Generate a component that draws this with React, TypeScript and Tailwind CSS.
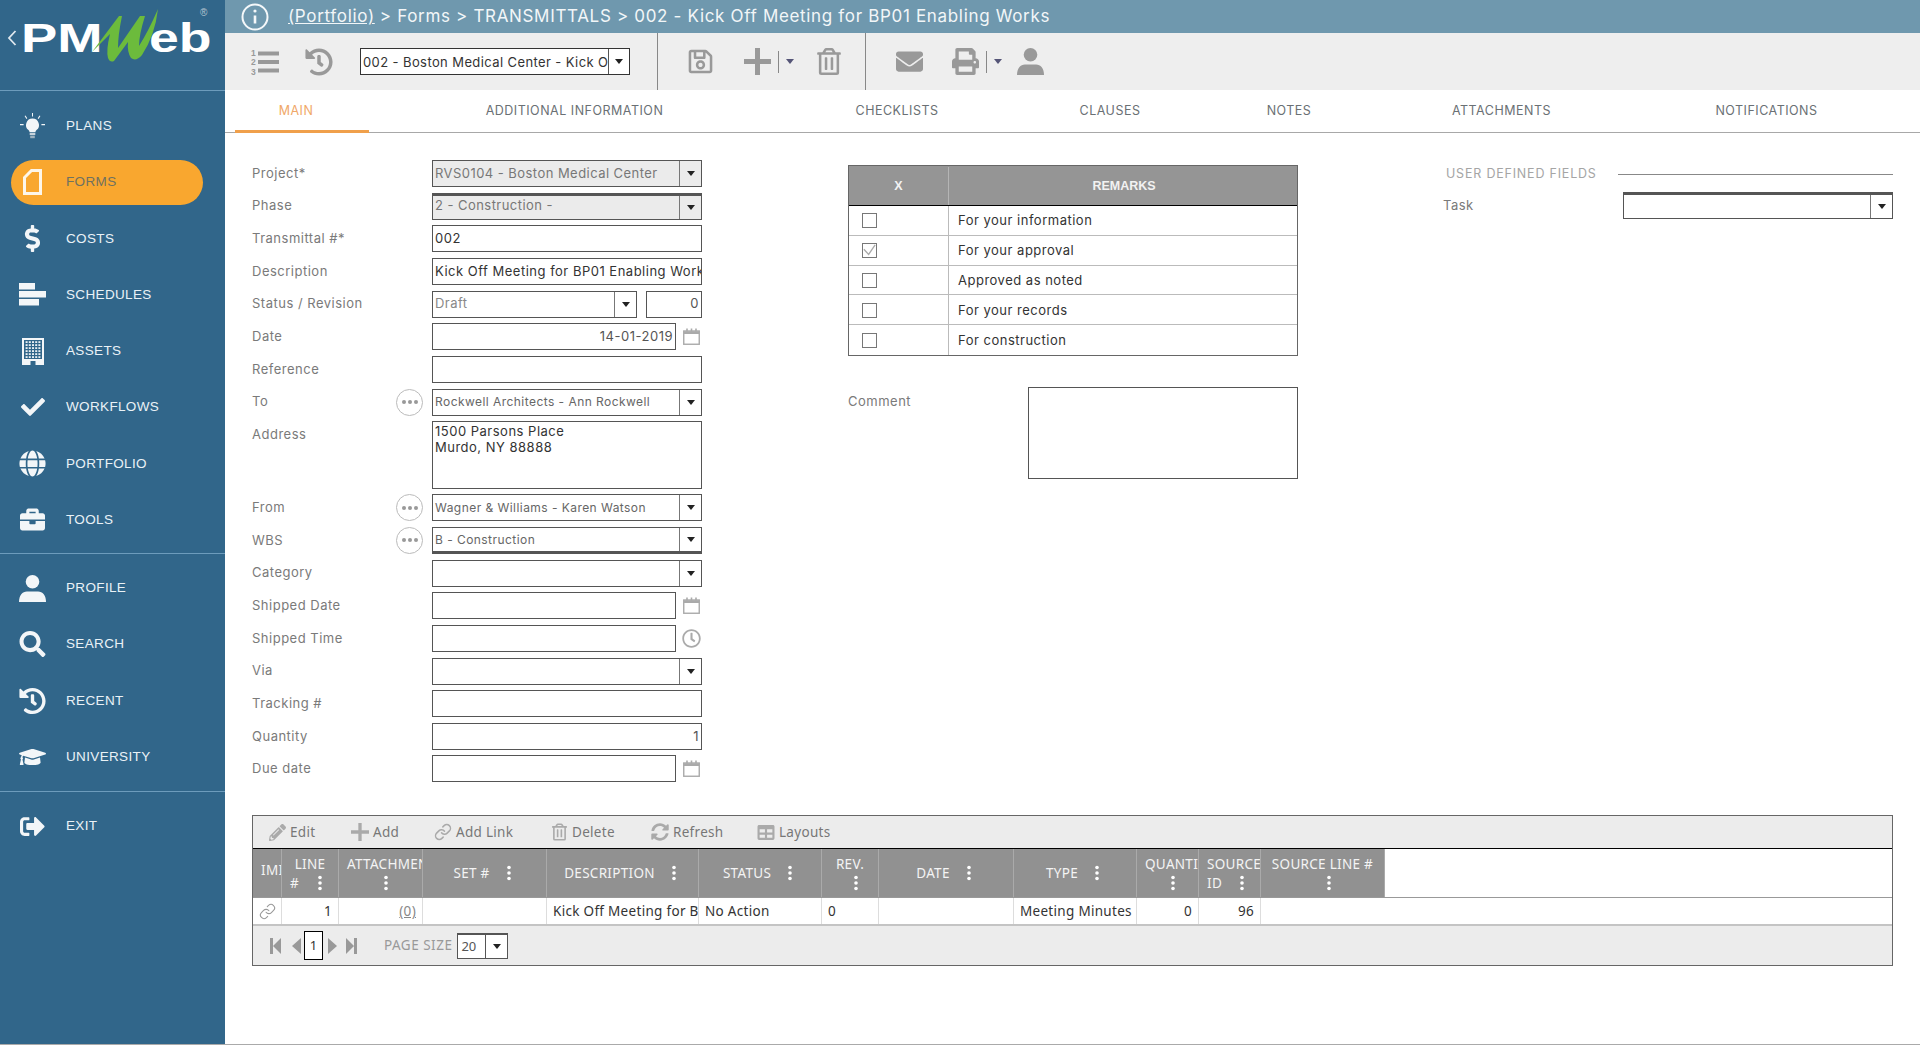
import type { ReactNode } from "react";
import { Link as LinkIcon } from "lucide-react";
import {
  FaBriefcase,
  FaCheck,
  FaDollarSign,
  FaEnvelope,
  FaGlobe,
  FaGraduationCap,
  FaHistory,
  FaPencilAlt,
  FaPrint,
  FaRegClock,
  FaRegSave,
  FaRegTrashAlt,
  FaSearch,
  FaSignOutAlt,
  FaSyncAlt,
  FaTable,
} from "react-icons/fa";

function BulbIcon() {
  return (
    <svg viewBox="0 0 25 26" className="h-[26px] w-[25px]" fill="currentColor">
      <path d="M12.5 5.5a6.5 6.5 0 0 0-4 11.6c.7.6 1 1.3 1.1 2.2h5.8c.1-.9.4-1.6 1.1-2.2a6.5 6.5 0 0 0-4-11.6z" />
      <rect x="9.7" y="20" width="5.6" height="2" fill="#c9d4dc" />
      <rect x="10.2" y="22.6" width="4.6" height="2.6" fill="#9fb2bf" />
      <path d="M12 0h1v3.4h-1zM4.6 3.1l.9-.6 1.8 2.8-.9.6zM19.5 2.5l.9.6-1.8 2.8-.9-.6zM0 11h3.6v1.2H0zM21.4 11H25v1.2h-3.6z" />
    </svg>
  );
}

function FormIcon() {
  return (
    <svg viewBox="0 0 19 26" className="h-[26px] w-[19px]" fill="none" stroke="currentColor" strokeWidth="3">
      <path d="M17.5 1.5v23h-16V8.5l7-7z" />
    </svg>
  );
}

function ScheduleIcon() {
  return (
    <svg viewBox="0 0 27 23" className="h-[23px] w-[27px]" fill="currentColor">
      <rect x="0" y="0" width="16" height="6.5" />
      <rect x="0" y="8" width="27" height="6.5" />
      <rect x="0" y="16" width="20" height="6.5" />
    </svg>
  );
}

function BuildingIcon() {
  const windows = [];
  for (let r = 0; r < 6; r++) {
    for (let c = 0; c < 5; c++) {
      windows.push(<rect key={`${r}-${c}`} x={3.6 + c * 3.2} y={3.2 + r * 3} width="2" height="1.8" fill="#e9eff3" />);
    }
  }
  return (
    <svg viewBox="0 0 22 27" className="h-[27px] w-[22px]">
      <path d="M0 0h22v27H13.5v-4h-5v4H0z" fill="#f3f6f8" />
      <rect x="2" y="2" width="18" height="19" fill="#31668a" />
      {windows}
    </svg>
  );
}

function UserIcon({ className }: { className?: string }) {
  return (
    <svg viewBox="0 0 27 27" className={className} fill="currentColor">
      <circle cx="13.5" cy="6.8" r="6.8" />
      <path d="M0 27c0-6.5 3.4-10.5 8-10.5h11c4.6 0 8 4 8 10.5z" />
    </svg>
  );
}

function PlusIcon({ className }: { className?: string }) {
  return (
    <svg viewBox="0 0 27 27" className={className} fill="currentColor">
      <path d="M11 0h5v11h11v5H16v11h-5V16H0v-5h11z" />
    </svg>
  );
}

function ListIcon() {
  return (
    <svg viewBox="0 0 28 28" className="h-[28px] w-[28px]" fill="#999999">
      <rect x="7" y="3.5" width="21" height="4" />
      <rect x="7" y="12" width="21" height="4" />
      <rect x="7" y="20.5" width="21" height="4" />
      <text x="0" y="8" fontSize="8.5" fontWeight="700" fontFamily="Liberation Sans, sans-serif">1</text>
      <text x="0" y="17" fontSize="8.5" fontWeight="700" fontFamily="Liberation Sans, sans-serif">2</text>
      <text x="0" y="27" fontSize="8.5" fontWeight="700" fontFamily="Liberation Sans, sans-serif">3</text>
    </svg>
  );
}

function CalendarIcon() {
  return (
    <svg viewBox="0 0 17 17" className="h-[17px] w-[17px]" fill="none" stroke="#aaaaaa">
      <rect x="0.75" y="3" width="15.5" height="13.25" strokeWidth="1.4" />
      <path d="M0.5 3.2h16v2.8H0.5z" fill="#aaaaaa" stroke="none" />
      <path d="M4 0.5v3M8.5 0.5v3M13 0.5v3" strokeWidth="1.6" />
    </svg>
  );
}

function Arrow() {
  return (
    <svg viewBox="0 0 8 5" className="h-[5px] w-[8px]" fill="#222222">
      <path d="M0 0h8L4 5z" />
    </svg>
  );
}

function Kebab() {
  return (
    <svg viewBox="0 0 4 16" className="h-[16px] w-[4px] shrink-0" fill="#ffffff">
      <circle cx="2" cy="2.5" r="1.8" />
      <circle cx="2" cy="8" r="1.8" />
      <circle cx="2" cy="13.5" r="1.8" />
    </svg>
  );
}

function PagerIcon({ d, w }: { d: string; w: string }) {
  return (
    <svg viewBox="0 0 11 18" className={`h-[18px] ${w} shrink-0`} fill="#999999">
      <path d={d} />
    </svg>
  );
}

function Select({
  text,
  disabled,
  sm,
  top,
  bottom,
  color = "text-[#333333]",
  width = "w-[270px]",
  arrowWidth = "w-[22px]",
}: {
  text?: string;
  disabled?: boolean;
  sm?: boolean;
  top?: boolean;
  bottom?: boolean;
  color?: string;
  width?: string;
  arrowWidth?: string;
}) {
  return (
    <div
      className={`flex h-[27px] ${width} shrink-0 border border-[#555555] ${disabled ? "bg-[#ebebeb]" : "bg-white"} ${
        top ? "border-t-[3px]" : ""
      } ${bottom ? "border-b-[3px]" : ""}`}
    >
      <div
        className={`flex min-w-0 flex-1 items-center overflow-hidden whitespace-nowrap pl-[2px] ${
          sm ? "text-[12px] tracking-[0.45px]" : "text-[13px] tracking-[0.45px]"
        } ${top ? "-mt-[2px]" : ""} ${bottom ? "mt-[2px]" : ""} ${color}`}
      >
        {text}
      </div>
      <div className={`flex ${arrowWidth} shrink-0 items-center justify-center border-l border-[#777777]`}>
        <Arrow />
      </div>
    </div>
  );
}

function Input({
  text,
  right,
  width = "w-[270px]",
  color = "text-[#333333]",
}: {
  text?: string;
  right?: boolean;
  width?: string;
  color?: string;
}) {
  return (
    <div
      className={`flex h-[27px] ${width} shrink-0 items-center overflow-hidden whitespace-nowrap border border-[#555555] bg-white px-[2px] text-[13px] tracking-[0.5px] ${color} ${
        right ? "justify-end" : ""
      }`}
    >
      {text}
    </div>
  );
}

function MoreButton() {
  return (
    <div className="flex h-[27px] w-[27px] items-center justify-center gap-[2px] rounded-full border-[1.5px] border-[#bbbbbb]">
      <span className="h-[4px] w-[4px] rounded-full bg-[#999999]" />
      <span className="h-[4px] w-[4px] rounded-full bg-[#999999]" />
      <span className="h-[4px] w-[4px] rounded-full bg-[#999999]" />
    </div>
  );
}

function FormRow({ label, more, tall, children }: { label: string; more?: boolean; tall?: boolean; children: ReactNode }) {
  return (
    <div className={`flex ${tall ? "h-[67.33px]" : "h-[27px]"}`}>
      <div className="flex h-[27px] w-[180px] shrink-0 items-center justify-between pr-[9px] text-[13px] tracking-[0.5px] text-[#7a7a7a]">
        <span>{label}</span>
        {more && <MoreButton />}
      </div>
      {children}
    </div>
  );
}

function DateField({ text, icon }: { text?: string; icon?: ReactNode }) {
  return (
    <div className="flex w-[270px] items-center justify-between">
      <Input text={text} right width="w-[244px]" color="text-[#555555]" />
      <div className="flex w-[22px] justify-center">{icon ?? <CalendarIcon />}</div>
    </div>
  );
}

const navTop = [
  { label: "PLANS", icon: <BulbIcon /> },
  { label: "FORMS", icon: <FormIcon />, active: true },
  { label: "COSTS", icon: <FaDollarSign className="h-[27px] w-[17px]" /> },
  { label: "SCHEDULES", icon: <ScheduleIcon /> },
  { label: "ASSETS", icon: <BuildingIcon /> },
  { label: "WORKFLOWS", icon: <FaCheck className="h-[24px] w-[26px]" /> },
  { label: "PORTFOLIO", icon: <FaGlobe className="h-[27px] w-[27px]" /> },
  { label: "TOOLS", icon: <FaBriefcase className="h-[25px] w-[27px]" /> },
];

const navBottom = [
  { label: "PROFILE", icon: <UserIcon className="h-[27px] w-[27px]" /> },
  { label: "SEARCH", icon: <FaSearch className="h-[26px] w-[27px]" /> },
  { label: "RECENT", icon: <FaHistory className="h-[28px] w-[28px]" /> },
  { label: "UNIVERSITY", icon: <FaGraduationCap className="h-[26px] w-[27px]" /> },
];

function NavItem({ label, icon, active }: { label: string; icon: ReactNode; active?: boolean }) {
  return (
    <div className="flex h-[56.25px] items-center">
      <div
        className={`flex h-[45px] items-center gap-[20px] text-[13.5px] tracking-[0.35px] ${
          active ? "ml-[11px] w-[192px] rounded-full bg-[#f9a72f] pl-[8px] text-[#6f7160]" : "w-full pl-[19px] text-[#eaf2f7]"
        }`}
      >
        <span className={`flex w-[27px] shrink-0 justify-center ${active ? "text-[#fdf6ea]" : "text-[#f3f6f8]"}`}>{icon}</span>
        <span>{label}</span>
      </div>
    </div>
  );
}

function Logo() {
  return (
    <div className="relative h-[91px] border-b border-[#6d9cbc] font-['Liberation_Sans',sans-serif] text-white">
      <svg viewBox="0 0 10 16" className="absolute left-[7px] top-[30px] h-[16px] w-[10px]" fill="none" stroke="#dfe8ee" strokeWidth="1.8">
        <path d="M8.5 1L2 8l6.5 7" />
      </svg>
      <span className="absolute left-[21px] top-[15px] origin-left scale-x-[1.36] text-[40px] font-bold leading-[46px]">PM</span>
      <span className="absolute left-[149px] top-[15px] origin-left scale-x-[1.34] text-[40px] font-bold leading-[46px]">eb</span>
      <svg viewBox="0 0 70 56" className="absolute left-[90px] top-[8px] h-[56px] w-[70px]" fill="#6cbb3c">
        <path d="M2 44L29 8l3 0Q28 27 28 40L50 8l5 0Q49 27 49 38Q58 24 68 1Q65 27 52 47Q46 54 41 50Q37 44 38 34L24 53Q20 55 18 50Q16 42 20 26z" />
      </svg>
      <span className="absolute left-[200px] top-[8px] text-[10px] leading-none text-[#b8c7d2]">®</span>
    </div>
  );
}

const tabs = [
  { label: "MAIN", w: "w-[134px]", active: true },
  { label: "ADDITIONAL INFORMATION", w: "w-[411px]" },
  { label: "CHECKLISTS", w: "w-[234px]" },
  { label: "CLAUSES", w: "w-[192px]" },
  { label: "NOTES", w: "w-[166px]" },
  { label: "ATTACHMENTS", w: "w-[259px]" },
  { label: "NOTIFICATIONS", w: "w-[271px]" },
];

const remarks = [
  { text: "For your information" },
  { text: "For your approval", checked: true },
  { text: "Approved as noted" },
  { text: "For your records" },
  { text: "For construction" },
];

const gridActions = [
  { label: "Edit", icon: <FaPencilAlt className="h-[17px] w-[17px]" />, w: "w-[83px]" },
  { label: "Add", icon: <PlusIcon className="h-[18px] w-[18px]" />, w: "w-[83px]" },
  { label: "Add Link", icon: <LinkIcon className="h-[18px] w-[18px]" strokeWidth={2} />, w: "w-[116px]" },
  { label: "Delete", icon: <FaRegTrashAlt className="h-[18px] w-[15px]" />, w: "w-[101px]" },
  { label: "Refresh", icon: <FaSyncAlt className="h-[18px] w-[20px]" />, w: "w-[106px]" },
  { label: "Layouts", icon: <FaTable className="h-[17px] w-[18px]" /> },
];

const columns = [
  { w: "w-[29px]", label: "IMI", clip: true },
  { w: "w-[57px]", label: "LINE", second: "#" },
  { w: "w-[84px]", label: "ATTACHMENTS", stack: "pl-[37px]", clip: true },
  { w: "w-[124px]", label: "SET #" },
  { w: "w-[152px]", label: "DESCRIPTION" },
  { w: "w-[123px]", label: "STATUS" },
  { w: "w-[57px]", label: "REV.", stack: "pl-[12px]" },
  { w: "w-[135px]", label: "DATE" },
  { w: "w-[123px]", label: "TYPE" },
  { w: "w-[62px]", label: "QUANTITY", stack: "pl-[26px]", clip: true },
  { w: "w-[62px]", label: "SOURCE", second: "ID", clip: true },
  { w: "w-[124px]", label: "SOURCE LINE #", stack: "pl-[12px]" },
];

function HeaderCell({ col }: { col: (typeof columns)[number] }) {
  const base = `flex h-full ${col.w} shrink-0 overflow-hidden border-r border-[#aaaaaa] text-[13.5px] leading-[18px] tracking-[0.3px] text-[#f4f4f4]`;
  if (col.label === "IMI") {
    return <div className={`${base} items-center justify-start whitespace-nowrap pb-[6px] pl-[8px]`}>IMI</div>;
  }
  if (col.second) {
    return (
      <div className={`${base} flex-col justify-center whitespace-nowrap px-[8px]`}>
        <span className="text-center">{col.label}</span>
        <span className="flex items-center justify-between pr-[8px] pt-[1px]">
          {col.second}
          <Kebab />
        </span>
      </div>
    );
  }
  if (col.stack) {
    return (
      <div className={`${base} flex-col justify-center whitespace-nowrap ${col.clip ? "items-start pl-[8px]" : "items-center"}`}>
        <span>{col.label}</span>
        <span className={`pt-[2px] ${col.stack}`}>
          <Kebab />
        </span>
      </div>
    );
  }
  return (
    <div className={`${base} items-center justify-center gap-[17px] whitespace-nowrap pr-[5px]`}>
      <span>{col.label}</span>
      <Kebab />
    </div>
  );
}

const cells = [
  { w: "w-[29px]", content: <LinkIcon className="h-[17px] w-[17px] shrink-0 text-[#999999]" strokeWidth={1.5} /> },
  { w: "w-[57px]", content: "1", right: true },
  { w: "w-[84px]", content: <span className="text-[#888888] underline">(0)</span>, right: true },
  { w: "w-[124px]" },
  { w: "w-[152px]", content: "Kick Off Meeting for Bid" },
  { w: "w-[123px]", content: "No Action" },
  { w: "w-[57px]", content: "0" },
  { w: "w-[135px]" },
  { w: "w-[123px]", content: "Meeting Minutes" },
  { w: "w-[62px]", content: "0", right: true },
  { w: "w-[62px]", content: "96", right: true },
  { w: "w-[124px]", noBorder: true },
];

export default function App() {
  return (
    <div className="h-[1047px] w-[1920px] overflow-hidden bg-white font-['Inter',sans-serif]">
      <div className="flex h-[1045px] border-b border-[#aaaaaa]">
        {/* Sidebar */}
        <aside className="flex w-[225px] shrink-0 flex-col bg-[#31668a] font-['Liberation_Sans',sans-serif]">
          <Logo />
          <div className="border-b border-[#6d9cbc] pb-[5px] pt-[7px]">
            {navTop.map((n) => (
              <NavItem key={n.label} {...n} />
            ))}
          </div>
          <div className="border-b border-[#6d9cbc] py-[6px]">
            {navBottom.map((n) => (
              <NavItem key={n.label} {...n} />
            ))}
          </div>
          <div className="py-[6px]">
            <NavItem label="EXIT" icon={<FaSignOutAlt className="h-[25px] w-[27px]" />} />
          </div>
        </aside>

        <main className="flex min-w-0 flex-1 flex-col">
          {/* Breadcrumb */}
          <div className="flex h-[33px] items-center whitespace-nowrap bg-[#6f98ae] pl-[16px] text-[17px] tracking-[0.67px] text-[#f2f6f8]">
            <svg viewBox="0 0 28 28" className="mr-[19px] h-[28px] w-[28px]" fill="none" stroke="#f5f8fa" strokeWidth="2">
              <circle cx="14" cy="14" r="12.5" />
              <path d="M14 12.5v8" strokeWidth="2.6" />
              <circle cx="14" cy="8" r="1.6" fill="#f5f8fa" stroke="none" />
            </svg>
            <span className="underline">(Portfolio)</span>
            <span className="ml-[5px]">&gt; Forms &gt; TRANSMITTALS &gt; 002 - Kick Off Meeting for BP01 Enabling Works</span>
          </div>

          {/* Toolbar */}
          <div className="flex h-[57px] items-center bg-[#eeeeee] text-[#999999]">
            <div className="ml-[26px] w-[54px]">
              <ListIcon />
            </div>
            <div className="w-[55px]">
              <FaHistory className="h-[28px] w-[28px]" />
            </div>
            <div className="flex h-[27px] w-[270px] border border-[#333333] bg-white">
              <div className="min-w-0 flex-1 overflow-hidden whitespace-nowrap pl-[2px] text-[13px] leading-[27px] tracking-[0.4px] text-[#333333]">
                002 - Boston Medical Center - Kick Off
              </div>
              <div className="flex w-[21px] items-center justify-center border-l border-[#555555]">
                <Arrow />
              </div>
            </div>
            <div className="ml-[27px] h-full w-px bg-[#888888]" />
            <FaRegSave className="ml-[29px] h-[27px] w-[27px]" />
            <PlusIcon className="ml-[30px] h-[27px] w-[27px]" />
            <div className="ml-[7px] h-[22px] w-px bg-[#888888]" />
            <svg viewBox="0 0 8 5" className="ml-[7px] h-[5px] w-[8px]" fill="#555577">
              <path d="M0 0h8L4 5z" />
            </svg>
            <FaRegTrashAlt className="ml-[23px] h-[27px] w-[24px]" />
            <div className="ml-[24px] h-full w-px bg-[#888888]" />
            <FaEnvelope className="ml-[30px] h-[27px] w-[27px]" />
            <FaPrint className="ml-[29px] h-[27px] w-[27px]" />
            <div className="ml-[7px] h-[22px] w-px bg-[#888888]" />
            <svg viewBox="0 0 8 5" className="ml-[7px] h-[5px] w-[8px]" fill="#555577">
              <path d="M0 0h8L4 5z" />
            </svg>
            <UserIcon className="ml-[15px] h-[27px] w-[27px]" />
          </div>

          {/* Tabs */}
          <div className="flex h-[43px] border-b border-[#a8a8a8] pl-[10px] text-[12.5px] tracking-[0.5px] text-[#6a7074]">
            {tabs.map((t) => (
              <div
                key={t.label}
                className={`flex ${t.w} items-center justify-center ${
                  t.active ? "-mb-px border-b-[3px] border-[#f0a04b] pr-[12px] pt-[3px] text-[#f0a868]" : ""
                }`}
              >
                {t.label}
              </div>
            ))}
          </div>

          <div className="flex h-[682px] flex-col pl-[27px] pt-[27px]">
            <div className="flex h-[655px] shrink-0">
              {/* Left form */}
              <div className="flex w-[596px] shrink-0 flex-col gap-[5.67px]">
                <FormRow label="Project*">
                  <Select text="RVS0104 - Boston Medical Center" disabled color="text-[#777777]" />
                </FormRow>
                <FormRow label="Phase">
                  <Select text="2 - Construction -" disabled top color="text-[#777777]" />
                </FormRow>
                <FormRow label="Transmittal #*">
                  <Input text="002" />
                </FormRow>
                <FormRow label="Description">
                  <Input text="Kick Off Meeting for BP01 Enabling Works" />
                </FormRow>
                <FormRow label="Status / Revision">
                  <div className="flex w-[270px] justify-between">
                    <Select text="Draft" width="w-[205px]" color="text-[#888888]" />
                    <Input text="0" right width="w-[56px]" color="text-[#555555]" />
                  </div>
                </FormRow>
                <FormRow label="Date">
                  <DateField text="14-01-2019" />
                </FormRow>
                <FormRow label="Reference">
                  <Input />
                </FormRow>
                <FormRow label="To" more>
                  <Select text="Rockwell Architects - Ann Rockwell" sm color="text-[#666666]" />
                </FormRow>
                <FormRow label="Address" tall>
                  <div className="h-[67.33px] w-[270px] border border-[#555555] px-[2px] pt-[1px] text-[13px] leading-[16px] tracking-[0.5px] text-[#333333]">
                    1500 Parsons Place
                    <br />
                    Murdo, NY 88888
                  </div>
                </FormRow>
                <FormRow label="From" more>
                  <Select text="Wagner & Williams - Karen Watson" sm color="text-[#666666]" />
                </FormRow>
                <FormRow label="WBS" more>
                  <Select text="B - Construction" sm bottom color="text-[#666666]" />
                </FormRow>
                <FormRow label="Category">
                  <Select />
                </FormRow>
                <FormRow label="Shipped Date">
                  <DateField />
                </FormRow>
                <FormRow label="Shipped Time">
                  <DateField icon={<FaRegClock className="h-[19px] w-[19px] text-[#aaaaaa]" />} />
                </FormRow>
                <FormRow label="Via">
                  <Select />
                </FormRow>
                <FormRow label="Tracking #">
                  <Input />
                </FormRow>
                <FormRow label="Quantity">
                  <Input text="1" right color="text-[#555555]" />
                </FormRow>
                <FormRow label="Due date">
                  <DateField />
                </FormRow>
              </div>

              {/* Remarks table */}
              <div className="flex w-[595px] shrink-0 flex-col pt-[5px]">
                <div className="w-[450px] border-[1.5px] border-[#666666]">
                  <div className="flex h-[40px] border-b border-black bg-[#959595] pt-[1px] font-['Liberation_Sans',sans-serif] text-[12.5px] font-bold text-[#f2f2f2]">
                    <div className="flex w-[100px] items-center justify-center border-r border-[#b5b5b5]">X</div>
                    <div className="flex flex-1 items-center justify-center pl-[2px]">REMARKS</div>
                  </div>
                  {remarks.map((r, i) => (
                    <div
                      key={r.text}
                      className={`flex h-[29.8px] ${i < remarks.length - 1 ? "border-b border-[#bbbbbb]" : ""}`}
                    >
                      <div className="flex w-[100px] items-center border-r border-[#bbbbbb] pl-[13px] pt-[1px]">
                        <div className="flex h-[15px] w-[15px] items-center justify-center border border-[#777777]">
                          {r.checked && (
                            <svg viewBox="0 0 15 15" className="h-[15px] w-[15px]" fill="none" stroke="#aaaaaa" strokeWidth="1.5">
                              <path d="M1 6l5.5 6L14 1" />
                            </svg>
                          )}
                        </div>
                      </div>
                      <div className="flex flex-1 items-center pl-[9px] pt-[1px] text-[13px] tracking-[0.5px] text-[#333333]">{r.text}</div>
                    </div>
                  ))}
                </div>
                <div className="mt-[31px] flex w-[450px] justify-between">
                  <span className="pt-[5px] text-[13px] tracking-[0.5px] text-[#7a7a7a]">Comment</span>
                  <div className="h-[92px] w-[270px] border border-[#555555]" />
                </div>
              </div>

              {/* User defined fields */}
              <div className="flex w-[450px] shrink-0 flex-col">
                <div className="flex h-[27px] items-center pl-[3px] pt-[1px]">
                  <span className="text-[12.5px] tracking-[0.8px] text-[#a5a5a5]">USER DEFINED FIELDS</span>
                  <div className="ml-[21px] h-px flex-1 bg-[#888888]" />
                </div>
                <div className="mt-[5px] flex items-center">
                  <span className="w-[180px] text-[13px] tracking-[0.5px] text-[#7a7a7a]">Task</span>
                  <Select top />
                </div>
              </div>
            </div>

            {/* Grid */}
            <div className="h-[152px] w-[1641px] border border-[#666666] font-['Noto_Sans',sans-serif]">
              <div className="flex h-[33px] items-center border-b border-black bg-[#ececec] pl-[15px] text-[13.5px] tracking-[0.3px] text-[#777777]">
                {gridActions.map((a) => (
                  <div key={a.label} className={`flex items-center gap-[4px] ${a.w ?? ""}`}>
                    <span className="flex w-[18px] justify-center text-[#aaaaaa]">{a.icon}</span>
                    {a.label}
                  </div>
                ))}
              </div>
              <div className="flex h-[49px] border-b border-[#999999]">
                <div className="flex h-full">
                  {columns.map((c) => (
                    <div key={c.label} className="h-full bg-[#919191]">
                      <HeaderCell col={c} />
                    </div>
                  ))}
                </div>
              </div>
              <div className="flex h-[28px] border-b-2 border-[#c4c4c4] text-[13.5px] tracking-[0.3px] text-[#333333]">
                {cells.map((c, i) => (
                  <div
                    key={i}
                    className={`flex ${c.w} shrink-0 items-center overflow-hidden whitespace-nowrap ${
                      c.noBorder ? "" : "border-r border-[#dddddd]"
                    } px-[6px] ${c.right ? "justify-end" : ""}`}
                  >
                    {c.content}
                  </div>
                ))}
              </div>
              <div className="flex h-[39px] items-center bg-[#ececec] pl-[17px] text-[#999999]">
                <PagerIcon w="w-[11px]" d="M0 1h3v16H0zM3 9l8-8v16z" />
                <span className="ml-[9px]">
                  <PagerIcon w="w-[11px]" d="M11 1v16L2 9z" />
                </span>
                <div className="ml-[3px] flex h-[29px] w-[19px] shrink-0 items-center justify-center border border-black bg-white text-[13px] text-[#333333]">
                  1
                </div>
                <span className="ml-[5px]">
                  <PagerIcon w="w-[11px]" d="M0 1v16l9-8z" />
                </span>
                <span className="ml-[7px]">
                  <PagerIcon w="w-[11px]" d="M8 1h3v16H8zM8 9L0 1v16z" />
                </span>
                <span className="ml-[27px] text-[13.5px] tracking-[0.5px]">PAGE SIZE</span>
                <div className="ml-[5px] flex h-[26px] w-[51px] border border-t-2 border-[#555555] bg-white">
                  <div className="flex-1 pl-[3px] pt-[2px] text-[13px] text-[#555555]">20</div>
                  <div className="flex w-[22px] items-center justify-center border-l border-[#555555]">
                    <Arrow />
                  </div>
                </div>
              </div>
            </div>
          </div>
        </main>
      </div>
    </div>
  );
}
